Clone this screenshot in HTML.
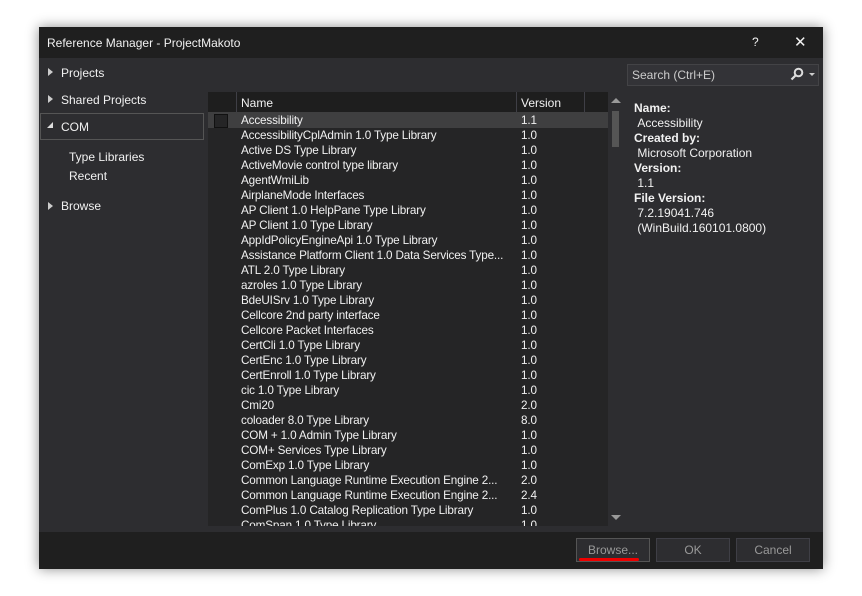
<!DOCTYPE html><html><head><style>
body{margin:0;width:862px;height:596px;background:#fff;position:relative;font-family:"Liberation Sans",sans-serif;font-size:12px;color:#f1f1f1;overflow:hidden}
.win{position:absolute;left:39px;top:27px;width:784px;height:542px;background:#2d2d30;box-shadow:0 0 12px rgba(0,0,0,.45)}
.title{position:absolute;left:0;top:0;width:784px;height:31px;background:#1f1f1f}
.t{position:absolute;white-space:nowrap}
.list{position:absolute;left:169px;top:65px;width:400px;height:434px;background:#252526;overflow:hidden}
.hdr{position:absolute;left:0;top:0;width:400px;height:20px;background:#1e1e1e}
.row{position:absolute;left:0;width:400px;height:15px;line-height:15px;font-size:11.7px;letter-spacing:-0.15px}
.row span{position:absolute}
.foot{position:absolute;left:0;top:505px;width:784px;height:37px;background:#1f1f1f}
.btn{position:absolute;top:6px;width:72px;height:22px;border:1px solid #3f3f46;background:#2d2d30;color:#999;text-align:center;line-height:22px}
.tri{position:absolute;width:0;height:0}
</style></head><body><div class="win">
<div class="title"><span class="t" style="left:8px;top:9px">Reference Manager - ProjectMakoto</span><span class="t" style="left:713px;top:8px">?</span><span class="t" style="left:755px;top:6px;font-size:15px">✕</span></div>
<div class="tri" style="left:9px;top:41px;border-left:5px solid #ccc;border-top:4px solid transparent;border-bottom:4px solid transparent"></div><span class="t" style="left:22px;top:39px">Projects</span>
<div class="tri" style="left:9px;top:68px;border-left:5px solid #ccc;border-top:4px solid transparent;border-bottom:4px solid transparent"></div><span class="t" style="left:22px;top:66px">Shared Projects</span>
<div style="position:absolute;left:1px;top:86px;width:162px;height:25px;border:1px solid #555"></div>
<div class="tri" style="left:8px;top:95px;border-right:6px solid #ddd;border-top:6px solid transparent"></div><span class="t" style="left:22px;top:93px">COM</span>
<span class="t" style="left:30px;top:123px">Type Libraries</span><span class="t" style="left:30px;top:142px">Recent</span>
<div class="tri" style="left:9px;top:175px;border-left:5px solid #ccc;border-top:4px solid transparent;border-bottom:4px solid transparent"></div><span class="t" style="left:22px;top:172px">Browse</span>
<div style="position:absolute;left:588px;top:37px;width:190px;height:20px;background:#333337;border:1px solid #434346"></div><span class="t" style="left:593px;top:41px;color:#ccc">Search (Ctrl+E)</span>
<svg style="position:absolute;left:751px;top:40px" width="14" height="14"><circle cx="8.5" cy="5.5" r="3.8" fill="none" stroke="#ddd" stroke-width="2"/><line x1="6" y1="8" x2="1.5" y2="12.5" stroke="#ddd" stroke-width="2.2"/></svg>
<div class="tri" style="left:770px;top:46px;border-top:3px solid #ccc;border-left:3px solid transparent;border-right:3px solid transparent"></div>
<div class="list"><div class="hdr"><div style="position:absolute;left:28px;top:0;width:1px;height:20px;background:#3f3f46"></div><div style="position:absolute;left:308px;top:0;width:1px;height:20px;background:#3f3f46"></div><div style="position:absolute;left:376px;top:0;width:1px;height:20px;background:#3f3f46"></div><span class="t" style="left:33px;top:4px">Name</span><span class="t" style="left:313px;top:4px">Version</span></div>
<div style="position:absolute;left:0;top:20px;width:400px;height:16px;background:#3f3f40"></div><div style="position:absolute;left:6px;top:22px;width:12px;height:12px;background:#252526;border:1px solid #111"></div>
<div id="rows"></div></div>
<div style="position:absolute;left:569px;top:65px;width:15px;height:434px;background:#2d2d30"></div>
<div style="position:absolute;left:573px;top:84px;width:7px;height:36px;background:#555"></div>
<div class="tri" style="left:572px;top:71px;border-bottom:5px solid #999;border-left:5px solid transparent;border-right:5px solid transparent"></div>
<div class="tri" style="left:572px;top:488px;border-top:5px solid #999;border-left:5px solid transparent;border-right:5px solid transparent"></div>
<div class="t" style="left:595px;top:74px;line-height:15px"><b>Name:</b><br>&nbsp;Accessibility<br><b>Created by:</b><br>&nbsp;Microsoft Corporation<br><b>Version:</b><br>&nbsp;1.1<br><b>File Version:</b><br>&nbsp;7.2.19041.746<br>&nbsp;(WinBuild.160101.0800)</div>
<div class="foot"><div class="btn" style="left:537px;border-color:#555">Browse...</div><div style="position:absolute;left:540px;top:26px;width:60px;height:3px;background:#e00;border-radius:2px"></div><div class="btn" style="left:617px">OK</div><div class="btn" style="left:697px">Cancel</div></div>
</div>
<script>
var d=[["Accessibility","1.1"],["AccessibilityCplAdmin 1.0 Type Library","1.0"],["Active DS Type Library","1.0"],["ActiveMovie control type library","1.0"],["AgentWmiLib","1.0"],["AirplaneMode Interfaces","1.0"],["AP Client 1.0 HelpPane Type Library","1.0"],["AP Client 1.0 Type Library","1.0"],["AppIdPolicyEngineApi 1.0 Type Library","1.0"],["Assistance Platform Client 1.0 Data Services Type...","1.0"],["ATL 2.0 Type Library","1.0"],["azroles 1.0 Type Library","1.0"],["BdeUISrv 1.0 Type Library","1.0"],["Cellcore 2nd party interface","1.0"],["Cellcore Packet Interfaces","1.0"],["CertCli 1.0 Type Library","1.0"],["CertEnc 1.0 Type Library","1.0"],["CertEnroll 1.0 Type Library","1.0"],["cic 1.0 Type Library","1.0"],["Cmi20","2.0"],["coloader 8.0 Type Library","8.0"],["COM + 1.0 Admin Type Library","1.0"],["COM+ Services Type Library","1.0"],["ComExp 1.0 Type Library","1.0"],["Common Language Runtime Execution Engine 2...","2.0"],["Common Language Runtime Execution Engine 2...","2.4"],["ComPlus 1.0 Catalog Replication Type Library","1.0"],["ComSpan 1.0 Type Library","1.0"]];
var h="";d.forEach(function(r,i){h+='<div class="row" style="top:'+(21+i*15)+'px"><span style="left:33px">'+r[0]+'</span><span style="left:313px">'+r[1]+'</span></div>'});document.getElementById("rows").innerHTML=h;
</script>
</body></html>
